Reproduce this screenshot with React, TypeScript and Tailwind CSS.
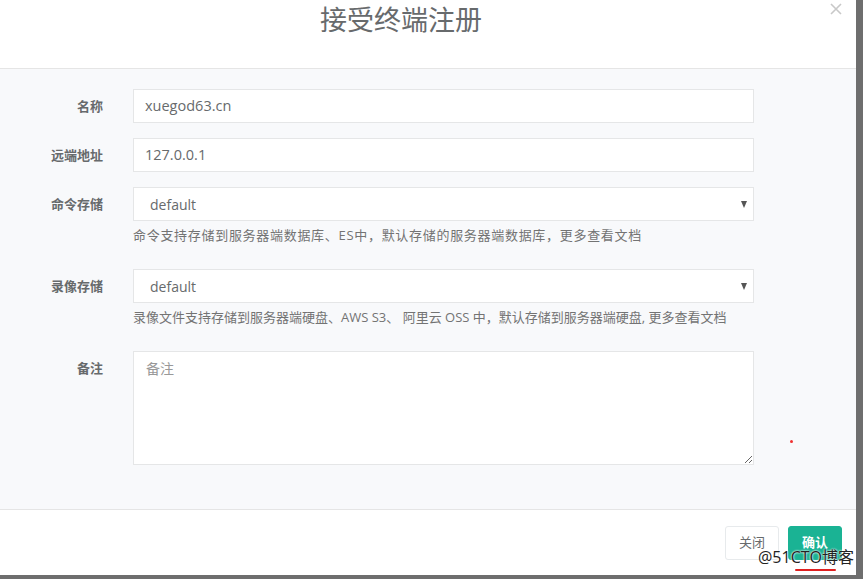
import React from "react";

const font = { fontFamily: '"Open Sans", "Noto Sans CJK SC", sans-serif' };

function Row({
  label,
  children,
  help,
  wide,
}: {
  label: string;
  children: React.ReactNode;
  help?: string;
  wide?: boolean;
}) {
  return (
    <div className="flex mb-[15px]">
      <label className="w-[103px] shrink-0 text-right pt-[7px] text-[13px] font-bold text-[#676a6c] leading-[20px]">
        {label}
      </label>
      <div className="ml-[30px] w-[621px]">
        {children}
        {help && (
          <p
            className={`mt-[5px] mb-[10px] text-[13px] leading-[18px] text-[#737373] ${
              wide ? "tracking-[0.7px]" : ""
            }`}
          >
            {help}
          </p>
        )}
      </div>
    </div>
  );
}

function Select({ value }: { value: string }) {
  return (
    <div className="relative h-[34px] bg-white border border-[#e5e6e7] flex items-center pl-[16px] text-[14px] text-[#676a6c]">
      {value}
      <span className="absolute right-[6px] top-[13px] w-0 h-0 border-l-[3.5px] border-r-[3.5px] border-t-[7px] border-l-transparent border-r-transparent border-t-[#555]" />
    </div>
  );
}

export default function App() {
  return (
    <div className="w-[863px] h-[579px] bg-[#6e6e6e] overflow-hidden" style={font}>
      <div className="relative w-[856px] h-[575px] bg-white flex flex-col">
        {/* header */}
        <div className="relative h-[69px] border-b border-[#e5e5e5] shrink-0">
          <h4 className="absolute left-0 right-[54px] top-[3px] text-center text-[27px] leading-[34px] text-[#676a6c]">
            接受终端注册
          </h4>
          <button className="absolute right-[14px] top-[3px] w-[12px] h-[12px] text-[#c8c8c8]" aria-label="close">
            <svg viewBox="0 0 12 12" width="12" height="12" fill="none" stroke="currentColor" strokeWidth="1.6">
              <path d="M1 1 L11 11 M11 1 L1 11" />
            </svg>
          </button>
        </div>

        {/* body */}
        <div className="bg-[#f8f9fb] pt-[20px] pb-[15px] h-[441px] shrink-0 border-b border-[#e5e5e5] relative">
          <Row label="名称">
            <div className="h-[34px] bg-white border border-[#e5e6e7] flex items-center px-[11px] text-[14.5px] text-[#676a6c]">
              xuegod63.cn
            </div>
          </Row>
          <Row label="远端地址">
            <div className="h-[34px] bg-white border border-[#e5e6e7] flex items-center px-[11px] text-[14.5px] text-[#676a6c]">
              127.0.0.1
            </div>
          </Row>
          <Row
            label="命令存储"
            wide
            help="命令支持存储到服务器端数据库、ES中，默认存储的服务器端数据库，更多查看文档"
          >
            <Select value="default" />
          </Row>
          <Row
            label="录像存储"
            help="录像文件支持存储到服务器端硬盘、AWS S3、 阿里云 OSS 中，默认存储到服务器端硬盘, 更多查看文档"
          >
            <Select value="default" />
          </Row>
          <Row label="备注">
            <textarea
              placeholder="备注"
              className="block w-full h-[114px] bg-white border border-[#e5e6e7] px-[12px] py-[6px] text-[14px] text-[#676a6c] placeholder:text-[#999] outline-none"
              style={font}
            />
          </Row>
          <span className="absolute left-[790px] top-[371px] w-[3px] h-[3px] rounded-full bg-[#f03030]" />
        </div>

        {/* footer */}
        <div className="flex-1 flex justify-end items-start pt-[16px] pr-[14px] gap-[9px]">
          <button className="h-[34px] w-[54px] bg-white border border-[#e7eaec] rounded-[3px] text-[13px] text-[#676a6c]">
            关闭
          </button>
          <button className="h-[34px] w-[54px] bg-[#1ab394] border border-[#1ab394] rounded-[3px] text-[13px] font-bold text-white">
            确认
          </button>
        </div>

        {/* watermark */}
        <div className="absolute right-[2px] bottom-[8px] text-[16px] leading-[20px] text-[#222] [text-shadow:0_0_2px_#fff,0_0_2px_#fff]">
          @51
          <span className="relative">
            CTO博
            <span className="absolute left-[4px] right-[2px] bottom-[-3px] h-[2px] rounded-full bg-[#e02020]" />
          </span>
          客
        </div>
      </div>
    </div>
  );
}
